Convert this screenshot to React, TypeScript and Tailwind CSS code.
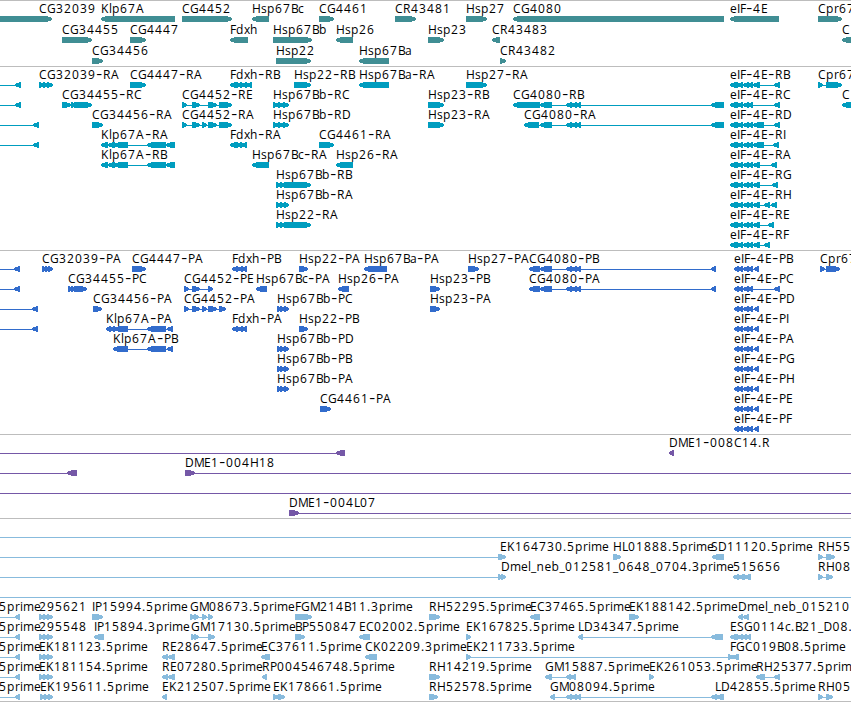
type Span = [number, number];

type Feature = {
  dir: "<" | ">";
  exons: Span[];
  label?: string;
  labelX?: number;
};

type Track = {
  name: string;
  height: string;
  rowHeight: string;
  color: string;
  rows: Feature[][];
};

const fwd = (exons: Span[], label?: string, labelX?: number): Feature => ({ dir: ">", exons, label, labelX });
const rev = (exons: Span[], label?: string, labelX?: number): Feature => ({ dir: "<", exons, label, labelX });

// spans far outside the view, used for features that run off an edge
const offLeft: Span = [-30, -20];
const offRight: Span = [880, 890];

const eif: Span[] = [[730, 738], [737, 743], [743, 749], [747, 753]];
const eifCds: Span[] = [[734, 739], [738, 743], [743, 749], [747, 753]];
const eifCdsFull: Span[] = [...eifCds, [754, 759]];
const cg4080Mid: Span[] = [[540, 552], [566, 572], [571, 577], [576, 581]];
const klpMid: Span[] = [[114, 128], [147, 166]];
const leftEnd = (x: number) => rev([offLeft, [x - 6, x]]);
const est = (label: string, x = 39) => fwd([[x, x + 5], [x + 4, x + 9], [x + 8, 53]], label, x);
const clipped = () => rev([offLeft, [15, 20]], "5prime", -1);

const tracks: Track[] = [
  {
    name: "genes",
    height: "h-[66px]",
    rowHeight: "h-[21px]",
    color: "fill-[#408e94]",
    rows: [
      [
        fwd([[-20, 52]], "CG32039", 39),
        rev([[101, 175]], "Klp67A"),
        fwd([[182, 232]], "CG4452"),
        rev([[252, 269]], "Hsp67Bc"),
        fwd([[319, 334]], "CG4461"),
        fwd([[395, 416]], "CR43481"),
        fwd([[466, 487]], "Hsp27"),
        rev([[513, 724]], "CG4080"),
        rev([[730, 779]], "eIF-4E"),
        fwd([[818, 842]], "Cpr67"),
      ],
      [
        fwd([[62, 92]], "CG34455"),
        fwd([[130, 146]], "CG4447"),
        rev([[230, 248]], "Fdxh"),
        fwd([[273, 312]], "Hsp67Bb"),
        rev([[336, 353]], "Hsp26"),
        fwd([[428, 444]], "Hsp23"),
        rev([[492, 500]], "CR43483"),
        rev([[842, 880]], "C"),
      ],
      [
        fwd([[92, 103]], "CG34456"),
        fwd([[276, 311]], "Hsp22"),
        rev([[359, 389]], "Hsp67Ba"),
        fwd([[500, 506]], "CR43482"),
      ],
    ],
  },
  {
    name: "transcripts",
    height: "h-[184px]",
    rowHeight: "h-[20px]",
    color: "fill-[#009dbf]",
    rows: [
      [
        leftEnd(21),
        fwd([[39, 44], [43, 48], [47, 53]], "CG32039-RA"),
        fwd([[130, 146]], "CG4447-RA"),
        rev([[230, 238], [237, 242], [241, 247], [246, 252]], "Fdxh-RB"),
        fwd([[294, 311]], "Hsp22-RB"),
        rev([[359, 389]], "Hsp67Ba-RA"),
        fwd([[466, 487]], "Hsp27-RA"),
        rev([...eif, [753, 760], [774, 780]], "eIF-4E-RB"),
        fwd([[818, 823], [826, 842]], "Cpr67"),
      ],
      [
        leftEnd(21),
        fwd([[62, 71], [71, 75], [74, 92]], "CG34455-RC"),
        fwd([[182, 187], [192, 200], [208, 217], [219, 232]], "CG4452-RE"),
        fwd([[273, 279], [278, 284], [283, 289]], "Hsp67Bb-RC"),
        fwd([[428, 444]], "Hsp23-RB"),
        rev([[513, 540], ...cg4080Mid, [711, 724]], "CG4080-RB"),
        rev([...eif, [774, 780]], "eIF-4E-RC"),
        rev([[842, 880]], "C"),
      ],
      [
        leftEnd(39),
        fwd([[92, 103]], "CG34456-RA"),
        fwd([[182, 187], [192, 200], [202, 207], [208, 217], [219, 232]], "CG4452-RA"),
        fwd([[273, 279], [278, 284], [283, 289]], "Hsp67Bb-RD"),
        fwd([[428, 444]], "Hsp23-RA"),
        rev([[524, 539], ...cg4080Mid, [711, 724]], "CG4080-RA"),
        rev([...eif, [753, 764], [774, 780]], "eIF-4E-RD"),
      ],
      [
        leftEnd(39),
        rev([[101, 108], [108, 115], ...klpMid, [166, 175]], "Klp67A-RA"),
        rev([[230, 238], [237, 242], [241, 247]], "Fdxh-RA"),
        fwd([[319, 334]], "CG4461-RA"),
        rev([...eif, [753, 764], [773, 779]], "eIF-4E-RI"),
      ],
      [
        rev([[101, 108], [108, 115], ...klpMid, [166, 175]], "Klp67A-RB"),
        rev([[252, 269]], "Hsp67Bc-RA"),
        rev([[336, 353]], "Hsp26-RA"),
        rev([...eif, [753, 760], [771, 777]], "eIF-4E-RA"),
      ],
      [
        fwd([[276, 281], [280, 285], [284, 311]], "Hsp67Bb-RB"),
        rev([...eif, [753, 760], [772, 778]], "eIF-4E-RG"),
      ],
      [
        fwd([[276, 281], [280, 285], [284, 289]], "Hsp67Bb-RA"),
        rev([...eif, [753, 760], [764, 770], [771, 777]], "eIF-4E-RH"),
      ],
      [
        fwd([[276, 281], [280, 285], [284, 311]], "Hsp22-RA"),
        rev([...eif, [753, 760], [768, 774]], "eIF-4E-RE"),
      ],
      [rev([...eif, [753, 760], [764, 770]], "eIF-4E-RF")],
    ],
  },
  {
    name: "proteins",
    height: "h-[184px]",
    rowHeight: "h-[20px]",
    color: "fill-[#326ccc]",
    rows: [
      [
        leftEnd(20),
        fwd([[42, 47], [45, 50], [48, 53]], "CG32039-PA"),
        fwd([[132, 146]], "CG4447-PA"),
        rev([[232, 238], [237, 243], [241, 247]], "Fdxh-PB"),
        fwd([[299, 308]], "Hsp22-PA"),
        rev([[364, 387]], "Hsp67Ba-PA"),
        fwd([[468, 479]], "Hsp27-PA"),
        rev([[529, 540], ...cg4080Mid, [711, 716]], "CG4080-PB"),
        rev(eifCdsFull, "eIF-4E-PB"),
        fwd([[820, 825], [826, 840]], "Cpr67"),
      ],
      [
        leftEnd(20),
        fwd([[68, 72], [71, 75], [74, 87]], "CG34455-PC"),
        fwd([[184, 189], [192, 200], [208, 213]], "CG4452-PE"),
        rev([[256, 267]], "Hsp67Bc-PA"),
        rev([[338, 349]], "Hsp26-PA"),
        fwd([[430, 440]], "Hsp23-PB"),
        rev([[529, 540], ...cg4080Mid, [711, 716]], "CG4080-PA"),
        rev([...eifCds, [774, 780]], "eIF-4E-PC"),
      ],
      [
        leftEnd(38),
        fwd([[93, 102]], "CG34456-PA"),
        fwd([[184, 189], [192, 200], [202, 207], [208, 217], [219, 226]], "CG4452-PA"),
        fwd([[277, 281], [280, 285], [284, 289]], "Hsp67Bb-PC"),
        fwd([[430, 440]], "Hsp23-PA"),
        rev(eifCdsFull, "eIF-4E-PD"),
      ],
      [
        leftEnd(38),
        rev([[106, 111], [110, 115], ...klpMid, [167, 173]], "Klp67A-PA"),
        rev([[232, 238], [237, 243], [241, 247]], "Fdxh-PA"),
        fwd([[299, 308]], "Hsp22-PB"),
        rev(eifCdsFull, "eIF-4E-PI"),
      ],
      [
        rev([[113, 128], [147, 166], [167, 173]], "Klp67A-PB"),
        fwd([[277, 281], [280, 285], [284, 289]], "Hsp67Bb-PD"),
        rev(eifCdsFull, "eIF-4E-PA"),
      ],
      [fwd([[277, 281], [280, 285], [284, 289]], "Hsp67Bb-PB"), rev(eifCdsFull, "eIF-4E-PG")],
      [fwd([[277, 281], [280, 285], [284, 289]], "Hsp67Bb-PA"), rev(eifCdsFull, "eIF-4E-PH")],
      [fwd([[320, 331]], "CG4461-PA"), rev(eifCdsFull, "eIF-4E-PE")],
      [rev(eifCdsFull, "eIF-4E-PF")],
    ],
  },
  {
    name: "clones",
    height: "h-[84px]",
    rowHeight: "h-[20px]",
    color: "fill-[#7558a7]",
    rows: [
      [rev([offLeft, [336, 345]]), rev([[669, 674]], "DME1-008C14.R")],
      [rev([offLeft, [67, 77]]), fwd([[185, 195], offRight], "DME1-004H18")],
      [fwd([offLeft, offRight])],
      [fwd([[289, 299], offRight], "DME1-004L07")],
    ],
  },
  {
    name: "ests",
    height: "h-[183px]",
    rowHeight: "h-[20px]",
    color: "fill-[#88bbdd]",
    rows: [
      [fwd([offLeft, offRight])],
      [
        fwd([offLeft, [498, 503], [500, 506]], "EK164730.5prime", 500),
        fwd([[613, 621]], "HL01888.5prime"),
        rev([[712, 724]], "SD11120.5prime", 711),
        fwd([[818, 823], [826, 835]], "RH55"),
      ],
      [
        fwd([offLeft, [498, 503], [501, 506]], "Dmel_neb_012581_0648_0704.3prime", 501),
        rev([[733, 739], [738, 745], [744, 751]], "515656"),
        fwd([[818, 823], [826, 833]], "RH08"),
      ],
      [fwd([offLeft, offRight])],
      [
        clipped(),
        est("295621"),
        fwd([[92, 103]], "IP15994.5prime"),
        fwd([[190, 195], [194, 199], [202, 207], [208, 213]], "GM08673.5prime"),
        fwd([[295, 312]], "FGM214B11.3prime"),
        fwd([[429, 440]], "RH52295.5prime"),
        rev([[530, 540]], "EC37465.5prime"),
        fwd([[629, 639]], "EK188142.5prime"),
        rev([[738, 743], [743, 749]], "Dmel_neb_015210"),
      ],
      [
        clipped(),
        est("295548"),
        rev([[94, 104]], "IP15894.3prime"),
        fwd([[191, 195], [194, 199], [208, 215]], "GM17130.5prime"),
        fwd([[295, 305]], "BP550847"),
        rev([[359, 370]], "EC02002.5prime"),
        fwd([[466, 471]], "EK167825.5prime"),
        rev([[578, 583], [711, 723]], "LD34347.5prime"),
        rev([[730, 738], [737, 743], [742, 747], [746, 751]], "ESG0114c.B21_D08."),
      ],
      [
        clipped(),
        est("EK181123.5prime"),
        rev([[162, 168], [168, 175]], "RE28647.5prime"),
        rev([[261, 270]], "EC37611.5prime"),
        rev([[365, 377]], "CK02209.3prime"),
        fwd([[466, 471], [728, 734]], "EK211733.5prime"),
        rev([[732, 739]], "FGC019B08.5prime", 730),
      ],
      [
        clipped(),
        est("EK181154.5prime"),
        rev([[162, 168], [168, 175]], "RE07280.5prime"),
        rev([[262, 267]], "RP004546748.5prime"),
        fwd([[429, 440]], "RH14219.5prime"),
        rev([[545, 552], [566, 571], [570, 576]], "GM15887.5prime"),
        fwd([[649, 654]], "EK261053.5prime"),
        rev([[756, 765], [774, 780]], "RH25377.5prime"),
      ],
      [
        clipped(),
        est("EK195611.5prime", 40),
        rev([[162, 167]], "EK212507.5prime"),
        fwd([[273, 279], [278, 285]], "EK178661.5prime"),
        fwd([[429, 438]], "RH52578.5prime"),
        rev([[550, 555], [566, 572], [571, 577], [576, 581], [711, 717], [716, 724]], "GM08094.5prime"),
        fwd([], "LD42855.5prime", 715),
        fwd([[818, 823], [826, 833]], "RH05"),
      ],
    ],
  },
];

const advances: Record<string, number> = {
  A: 9, B: 7, C: 8, D: 9, E: 7, F: 6, G: 9, H: 9, I: 3, K: 8, L: 6, M: 10, P: 7, R: 8, S: 7,
  a: 7, b: 8, c: 6, d: 8, e: 7, h: 8, i: 3, l: 3, m: 11, n: 8, p: 8, r: 5, s: 6, x: 6,
  ".": 4, "-": 7, _: 5.5,
};

function glyphPositions(text: string, start: number) {
  let x = start;
  return Array.from(text)
    .map((ch) => {
      const at = x;
      x += advances[ch] ?? 8;
      return at;
    })
    .join(" ");
}

function exonPoints([start, end]: Span, dir: "<" | ">") {
  const head = Math.min(end - start, 6);
  if (dir === ">") {
    const neck = end - head;
    return `${start},15 ${neck + 1},15 ${end},17 ${end},19 ${neck + 1},21 ${start},21`;
  }
  const neck = start + head;
  return `${end},15 ${neck - 1},15 ${start},17 ${start},19 ${neck - 1},21 ${end},21`;
}

function FeatureGlyph({ feature, color }: { feature: Feature; color: string }) {
  const { exons, dir, label } = feature;
  const first = exons[0]?.[0] ?? 0;
  const last = exons[exons.length - 1]?.[1] ?? 0;
  return (
    <g>
      <g className={color} shapeRendering="crispEdges">
        {exons.length > 1 && <rect x={first} y={18} width={last - first} height={1} />}
        {exons.map((exon) => (
          <polygon key={exon[0]} points={exonPoints(exon, dir)} />
        ))}
      </g>
      {label && (
        <text x={glyphPositions(label, feature.labelX ?? first)} y={12} className="fill-black">
          {label.split(/(-)/).map((part, i) =>
            part === "-" ? (
              <tspan key={i} className="font-['Inter',sans-serif] text-[14px]">
                {part}
              </tspan>
            ) : (
              part
            ),
          )}
        </text>
      )}
    </g>
  );
}

export default function App() {
  return (
    <main className="flex h-[702px] w-[851px] flex-col overflow-hidden border-b border-[#bdbdbd] bg-white font-['Open_Sans',sans-serif] text-[12px]">
      {tracks.map((track) => (
        <section key={track.name} className={`flex shrink-0 flex-col border-t border-[#bdbdbd] ${track.height}`}>
          {track.rows.map((row, i) => (
            <svg key={i} className={`block w-full shrink-0 overflow-visible ${track.rowHeight}`}>
              {row.map((feature, j) => (
                <FeatureGlyph key={j} feature={feature} color={track.color} />
              ))}
            </svg>
          ))}
        </section>
      ))}
    </main>
  );
}
